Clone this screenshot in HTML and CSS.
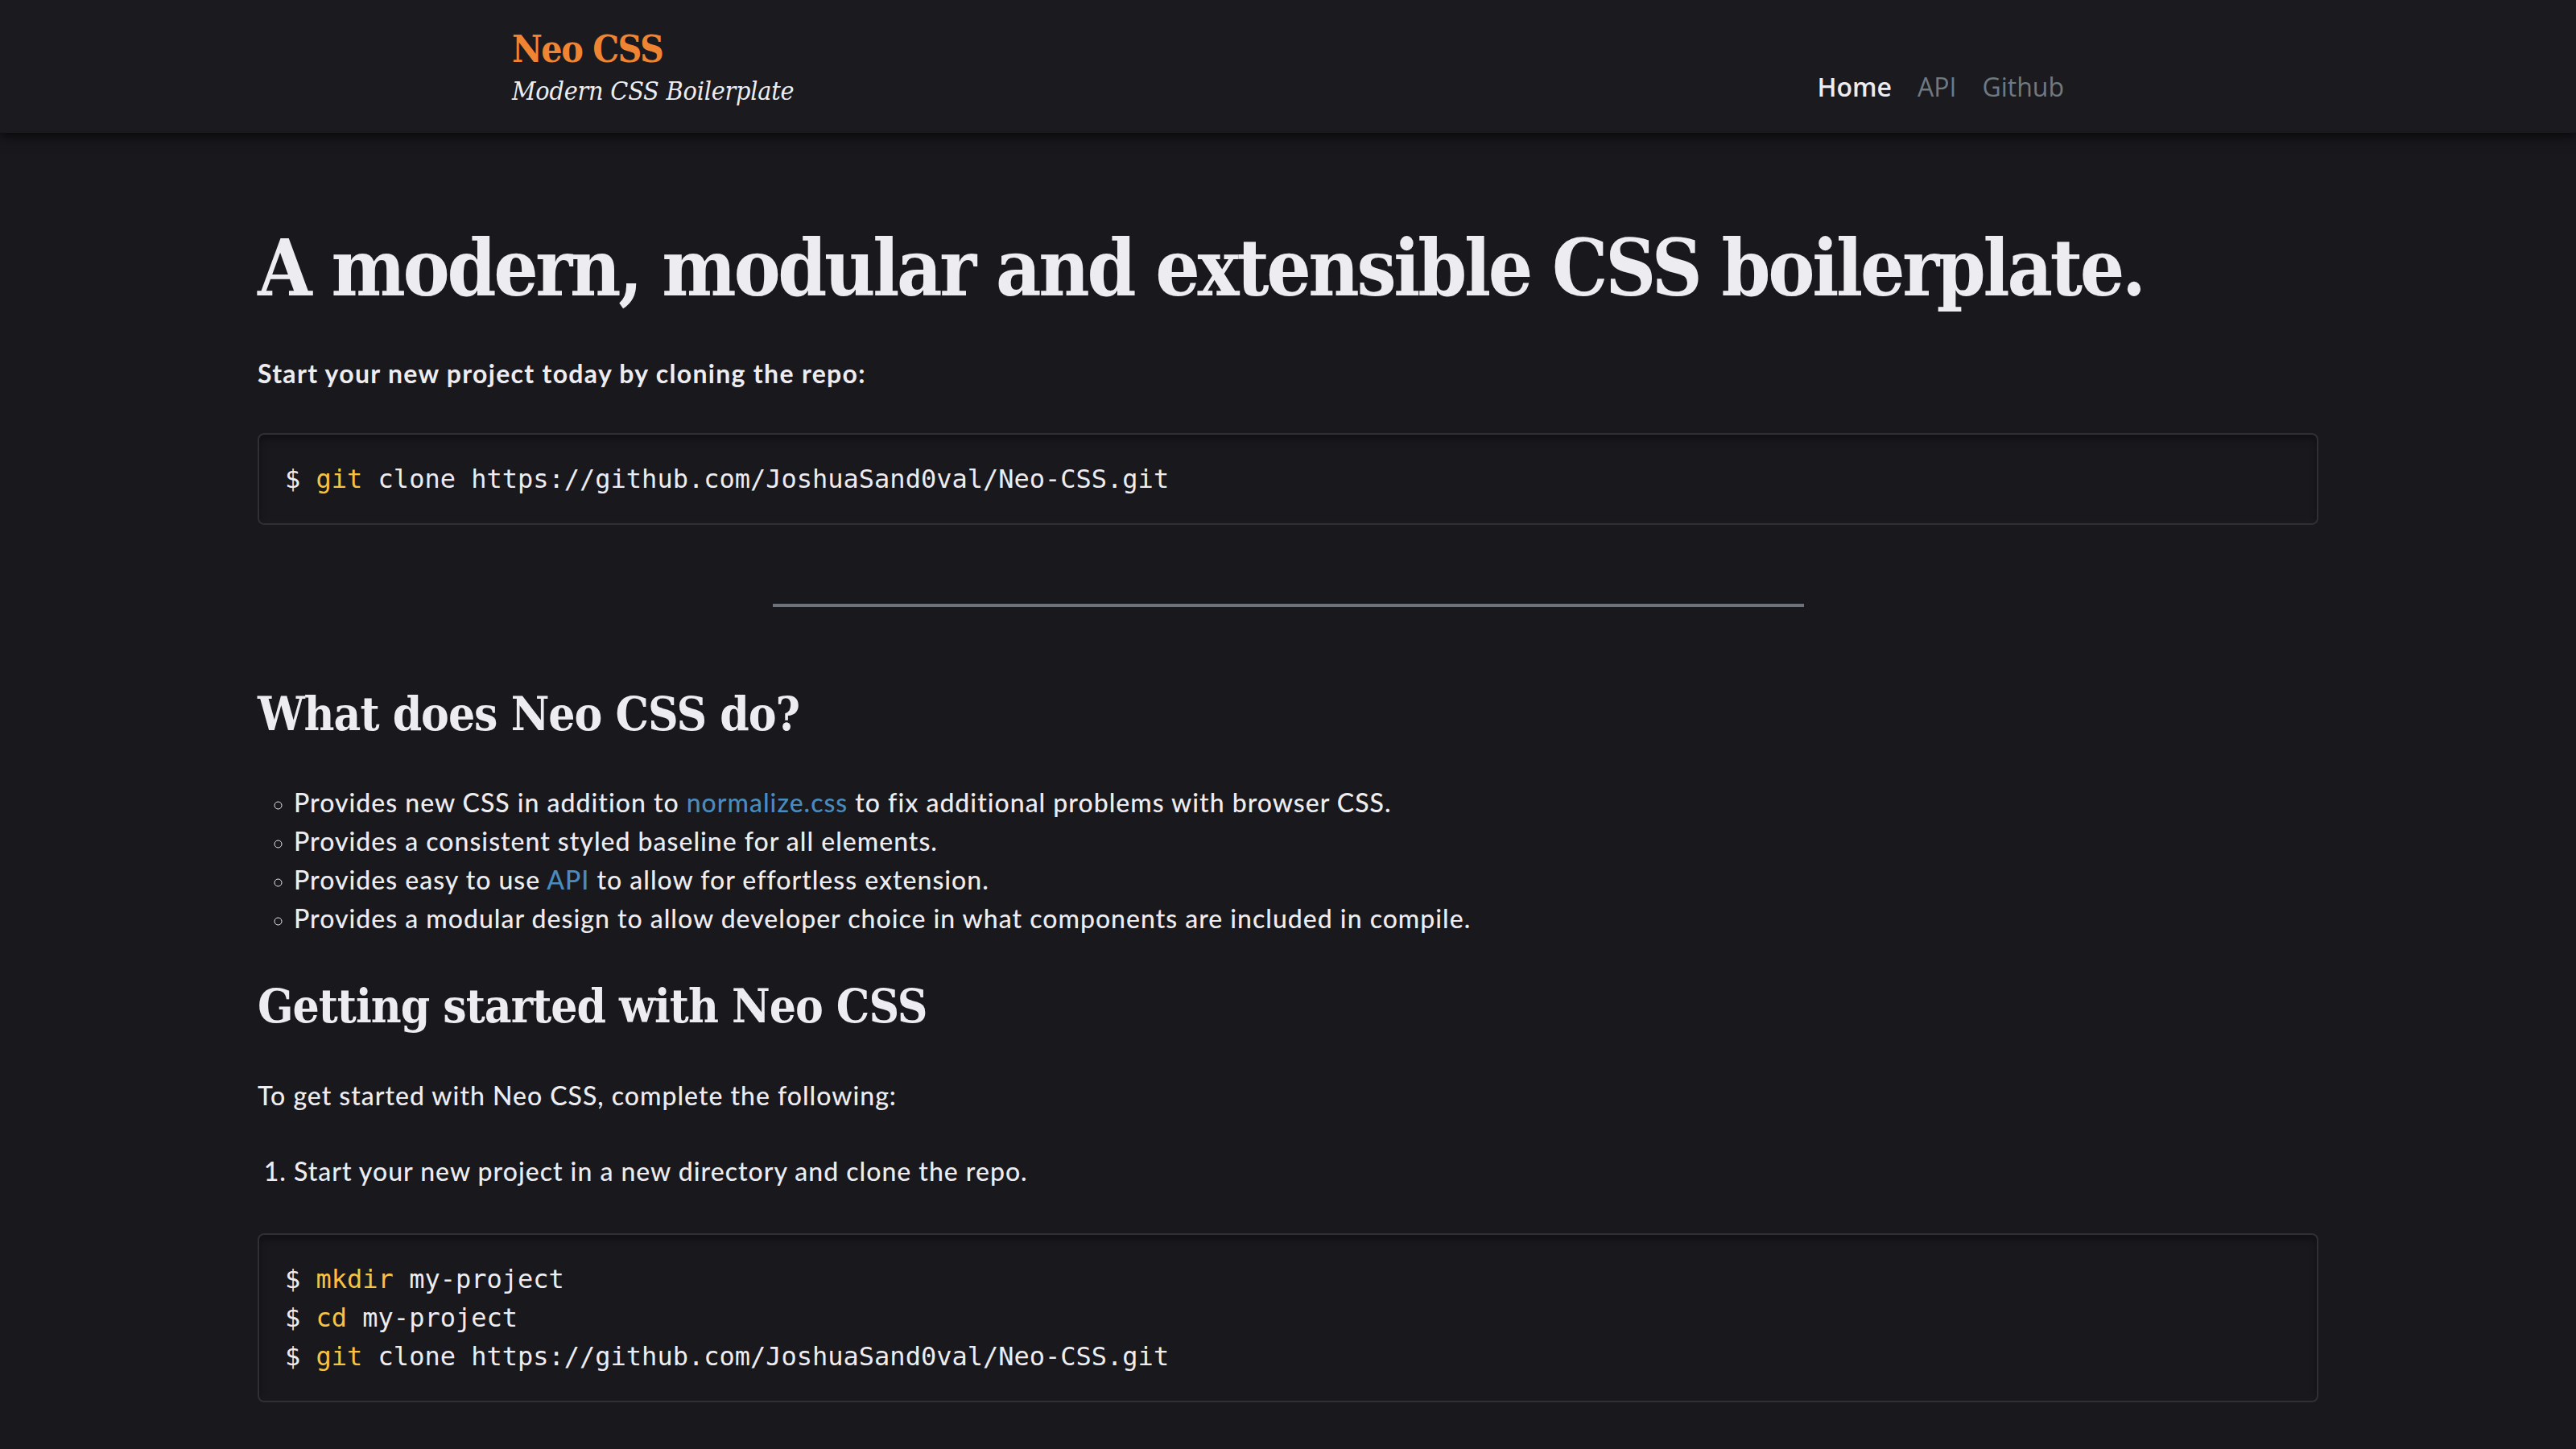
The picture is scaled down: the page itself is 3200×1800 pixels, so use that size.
FILE: index.html
```html
<!DOCTYPE html>
<html lang="en">
<head>
<meta charset="utf-8">
<title>Neo CSS</title>
<link rel="stylesheet" href="styles.css">
</head>
<body>
<header class="site-header">
  <div class="header-inner">
    <div class="brand">
      <div class="brand-name">Neo CSS</div>
      <div class="brand-tag">Modern CSS Boilerplate</div>
    </div>
    <nav class="nav">
      <a class="nav-link active" href="#">Home</a>
      <a class="nav-link" href="#">API</a>
      <a class="nav-link" href="#">Github</a>
    </nav>
  </div>
</header>
<main class="content">
  <h1 class="title">A modern, modular and extensible CSS boilerplate.</h1>
  <p class="lead">Start your new project today by cloning the repo:</p>
  <pre class="code"><span class="cmd">$</span> <span class="kw">git</span> clone https://github.com/JoshuaSand0val/Neo-CSS.git</pre>
  <hr class="rule">
  <h2 class="section">What does Neo CSS do?</h2>
  <ul class="features">
    <li>Provides new CSS in addition to <a class="link" href="#">normalize.css</a> to fix additional problems with browser CSS.</li>
    <li>Provides a consistent styled baseline for all elements.</li>
    <li>Provides easy to use <a class="link" href="#">API</a> to allow for effortless extension.</li>
    <li>Provides a modular design to allow developer choice in what components are included in compile.</li>
  </ul>
  <h2 class="section section-2">Getting started with Neo CSS</h2>
  <p class="text">To get started with Neo CSS, complete the following:</p>
  <ol class="steps">
    <li>Start your new project in a new directory and clone the repo.</li>
  </ol>
  <pre class="code code-2"><span class="cmd">$</span> <span class="kw">mkdir</span> my-project
<span class="cmd">$</span> <span class="kw">cd</span> my-project
<span class="cmd">$</span> <span class="kw">git</span> clone https://github.com/JoshuaSand0val/Neo-CSS.git</pre>
</main>
</body>
</html>
```
FILE: styles.css
```css
* { box-sizing: border-box; }

html, body {
  margin: 0;
  padding: 0;
  background: #19181d;
  color: #ececf1;
}

body {
  font-family: Lato, "Noto Sans", sans-serif;
  font-weight: 500;
  font-size: 32px;
  line-height: 1.5;
  letter-spacing: 1px;
  min-height: 1800px;
}

.site-header {
  background: #1b1a1f;
  height: 165px;
  box-shadow: 0 4px 14px rgba(0, 0, 0, 0.75);
  position: relative;
  z-index: 1;
}

.header-inner {
  width: 1928px;
  margin: 0 auto;
  padding-top: 33px;
  display: flex;
  justify-content: space-between;
  align-items: flex-end;
}

.brand-name {
  font-family: "DejaVu Serif Condensed", "DejaVu Serif", serif;
  font-stretch: condensed;
  font-weight: 700;
  font-size: 46px;
  letter-spacing: -1.5px;
  line-height: 57px;
  color: #ef8532;
}

.brand-tag {
  font-family: "DejaVu Serif Condensed", "DejaVu Serif", serif;
  font-stretch: condensed;
  font-style: italic;
  font-weight: 400;
  font-size: 32px;
  letter-spacing: -0.2px;
  line-height: 1.2;
  margin-top: 4px;
  color: #ececf1;
}

.nav {
  display: flex;
  gap: 32px;
  margin-bottom: 5px;
}

.nav-link {
  font-family: "Open Sans", "Noto Sans", sans-serif;
  font-weight: 500;
  font-size: 32px;
  letter-spacing: 0;
  line-height: 1.2;
  color: #6f7a80;
  text-decoration: none;
}

.nav-link.active {
  color: #ececf1;
  font-weight: 600;
}

.content {
  width: 2560px;
  margin: 0 auto;
  padding-top: 110px;
}

.title {
  font-family: "DejaVu Serif Condensed", "DejaVu Serif", serif;
  font-stretch: condensed;
  font-weight: 700;
  font-size: 97px;
  letter-spacing: -3.3px;
  line-height: 1.2;
  white-space: nowrap;
  margin: 0 0 49px;
}

.lead {
  font-weight: 700;
  letter-spacing: 1.3px;
  margin: 0 0 50px;
}

.code {
  font-family: "DejaVu Sans Mono", "Liberation Mono", monospace;
  font-weight: 400;
  font-size: 32px;
  letter-spacing: 0;
  line-height: 48px;
  margin: 0;
  padding: 31px 32px;
  border: 2px solid #302f36;
  border-radius: 8px;
  background: #19181d;
  box-shadow: inset 0 5px 10px rgba(0, 0, 0, 0.35), inset 0 -6px 10px rgba(255, 255, 255, 0.015);
  color: #ececf1;
}

.kw { color: #f6c244; }

.rule {
  width: 1281px;
  height: 4px;
  border: 0;
  background: #6b747a;
  margin: 98px auto 99px;
}

.section {
  font-family: "DejaVu Serif Condensed", "DejaVu Serif", serif;
  font-stretch: condensed;
  font-weight: 700;
  font-size: 58px;
  letter-spacing: -1px;
  line-height: 1.2;
  margin: 0 0 50px;
}

.features {
  list-style: circle;
  margin: 0 0 51px;
  padding-left: 45px;
}

.features li::marker { font-size: 26px; }

.link {
  color: #4a8bbd;
  text-decoration: none;
}

.section-2 { margin-bottom: 51px; }

.text { margin: 0 0 46px; }

.steps {
  margin: 0 0 53px;
  padding-left: 45px;
}
```
